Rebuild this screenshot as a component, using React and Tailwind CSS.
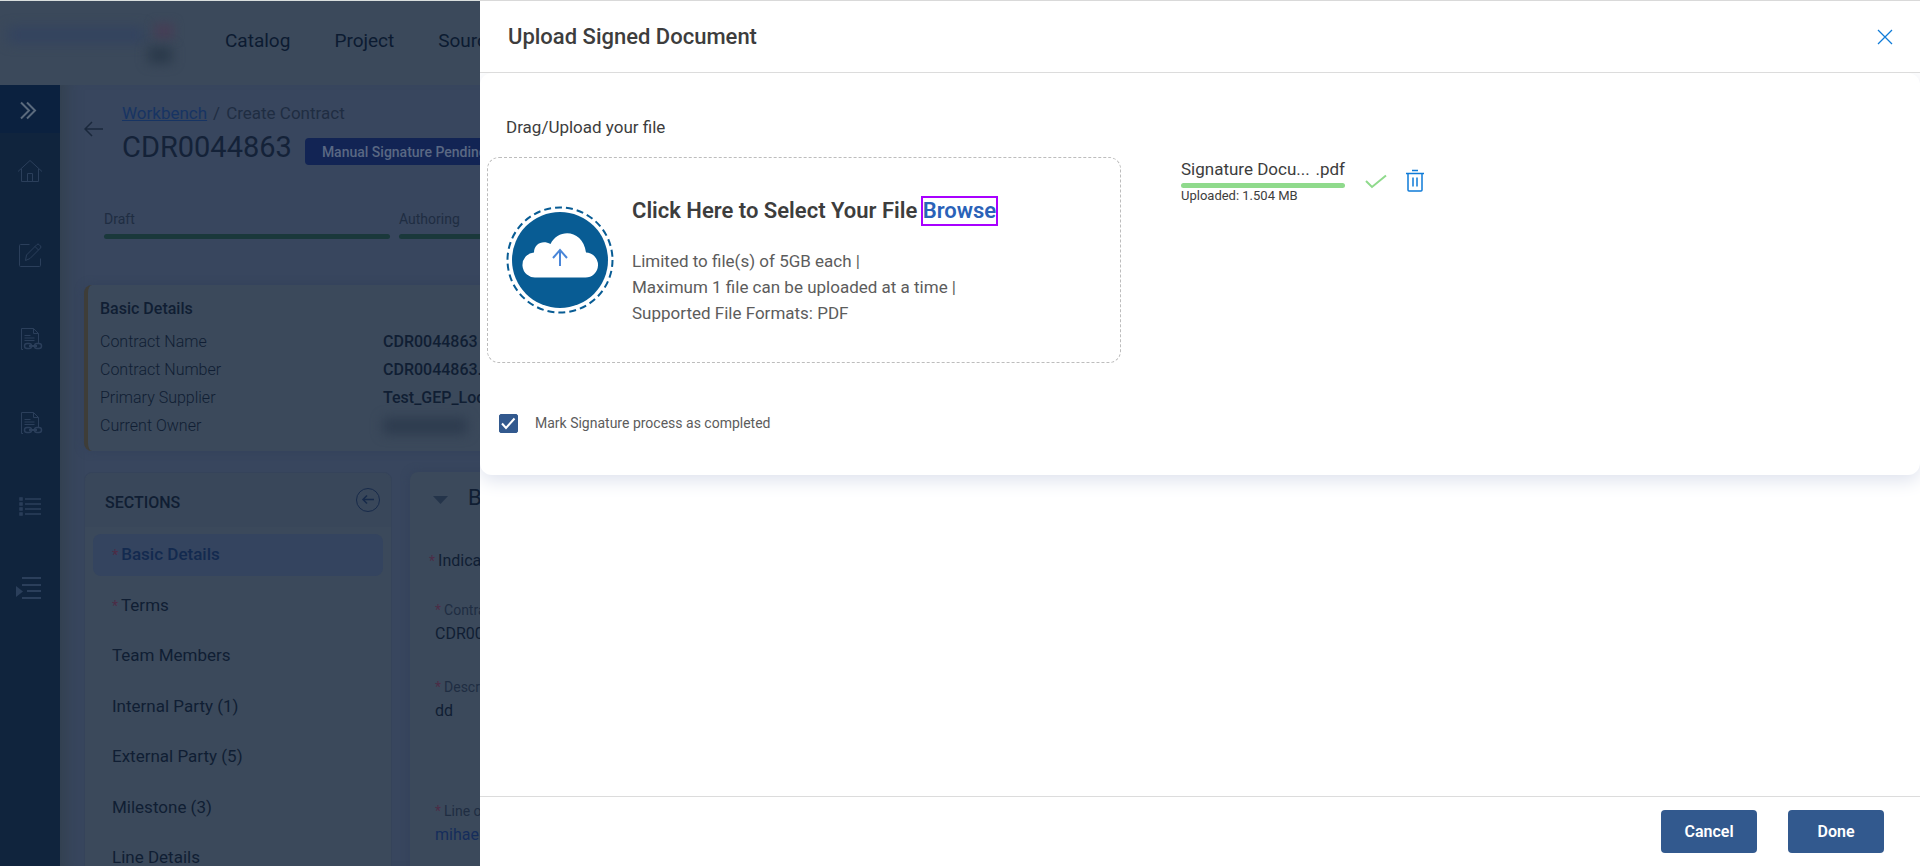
import { useState } from 'react';

const NAV = ['Catalog', 'Project', 'Sourcing'];

const DETAILS = [
  { label: 'Contract Name', value: 'CDR0044863' },
  { label: 'Contract Number', value: 'CDR0044863.0' },
  { label: 'Primary Supplier', value: 'Test_GEP_Loc' },
];

const SECTIONS = [
  { name: 'Basic Details', required: true, active: true },
  { name: 'Terms', required: true },
  { name: 'Team Members' },
  { name: 'Internal Party (1)' },
  { name: 'External Party (5)' },
  { name: 'Milestone (3)' },
  { name: 'Line Details' },
];

function Icon({ children, size = 28, sw = 1 }) {
  return (
    <svg width={size} height={size} viewBox={`0 0 ${size} ${size}`} fill="none" stroke="currentColor" strokeWidth={sw} aria-hidden="true">
      {children}
    </svg>
  );
}

const HomeIcon = () => (
  <Icon>
    <path d="M2 14.500 14 3.500l12 11M5.500 12v12.500h17V12M11.500 24.500v-8h5v8" />
  </Icon>
);

const EditIcon = () => (
  <Icon>
    <path d="M13.500 3.500h-9a1 1 0 0 0-1 1v20a1 1 0 0 0 1 1h19a1 1 0 0 0 1-1v-7" />
    <path d="M9.500 19.500 10.500 14 21 3.500q1-1 2 0l1.500 1.500q1 1 0 2L14 17.500l-4.500 2ZM19 5.500l3.500 3.500" />
  </Icon>
);

const DocLinkIcon = () => (
  <Icon>
    <path d="M7 24.500H5.500v-21h12l5 5V18M17.500 3.500v5h5M8.500 10.500h6M8.500 13h10M8.500 15.500h10" />
    <rect x="8.500" y="18.500" width="7" height="5" rx="2.500" strokeWidth="1.500" />
    <rect x="18.500" y="18.500" width="7" height="5" rx="2.500" strokeWidth="1.500" />
    <path d="M13 21h8" strokeWidth="2" />
  </Icon>
);

const ListIcon = () => (
  <Icon>
    {[6, 11, 16, 21].map(y => (
      <g key={y}>
        <rect x="4" y={y - 1} width="2" height="2" strokeWidth="1.500" />
        <path d={`M9 ${y}h16`} strokeWidth="1.500" />
      </g>
    ))}
  </Icon>
);

const IndentIcon = () => (
  <Icon sw={2}>
    <path d="M6 1h19M6 8h19M11 14h14M6 21h19" />
    <path d="M0 9v11l7-5.500Z" fill="currentColor" stroke="none" />
  </Icon>
);

const SIDE_ITEMS = [
  { name: 'Home', icon: HomeIcon },
  { name: 'Edit', icon: EditIcon },
  { name: 'Linked document', icon: DocLinkIcon },
  { name: 'Related document', icon: DocLinkIcon },
  { name: 'List', icon: ListIcon },
  { name: 'Outline', icon: IndentIcon },
];

const Star = () => <span className="mr-[3px] text-sm text-[#4d2c46]">*</span>;

function Header() {
  return (
    <header className="h-[85px] shrink-0 flex items-center border-t border-[#d9dedd] bg-[#3b495b]">
      <div className="w-[225px] h-14 relative shrink-0" aria-hidden="true">
        <div className="absolute left-2 top-3 w-34 h-4 bg-[#33435f] blur-[6px]" />
        <div className="absolute left-[154px] top-2 w-5 h-4 bg-[#453f56] blur-[5px]" />
        <div className="absolute left-[148px] top-8 w-6 h-4 bg-[#2a394a] blur-[6px]" />
      </div>
      <nav className="flex gap-11 pb-[3px] text-[19px] text-[#0c1b31]">
        {NAV.map(n => <a key={n} href="#">{n}</a>)}
      </nav>
    </header>
  );
}

function Sidebar() {
  return (
    <aside className="w-[60px] shrink-0 bg-[#10243d] text-[#2b3f5b]">
      <button aria-label="Expand menu" className="w-full h-12 pt-1 pr-1 flex items-center justify-center bg-[#0b213f] text-[#5a6a7d]">
        <Icon size={20} sw={2}>
          <path d="m3 1.500 8 8-8 8M9 1.500l8 8-8 8" />
        </Icon>
      </button>
      {SIDE_ITEMS.map(({ name, icon: Glyph }) => (
        <button key={name} aria-label={name} className="w-full h-[84px] pt-6 flex items-start justify-center">
          <Glyph />
        </button>
      ))}
    </aside>
  );
}

function Field({ label, value, link }) {
  return (
    <div className="leading-6">
      <div className="text-sm leading-6 text-[#1f2d42]"><Star />{label}</div>
      {link ? <a href="#" className="text-[#152d5b]">{value}</a> : <div>{value}</div>}
    </div>
  );
}

function Workbench() {
  return (
    <main className="flex-1 min-w-0 bg-[#38465e] shadow-[inset_20px_0_16px_-14px_#33414f] pl-6 text-base text-[#101e33]">
      <div className="flex pt-4">
        <button aria-label="Back" className="w-9.5 h-14 flex items-center text-[#1a283c]">
          <Icon size={20} sw={1}>
            <path d="M19 10H1M8 3l-7 7 7 7" strokeWidth="1.500" />
          </Icon>
        </button>
        <div>
          <div className="text-[17px] leading-6 flex gap-1.5 text-[#1f2d42]">
            <a href="#" className="underline text-[#173463]">Workbench</a>
            <span>/</span>
            <span>Create Contract</span>
          </div>
          <div className="flex items-center gap-[13px]">
            <h1 className="text-[29px] leading-11 text-[#142238]">CDR0044863</h1>
            <span className="mt-2 h-[27px] px-[17px] rounded bg-[#122454] text-sm leading-7 font-medium text-[#5a6883] whitespace-nowrap">Manual Signature Pending</span>
          </div>
        </div>
      </div>

      <div className="flex gap-[9px] pl-5 pt-10 text-sm leading-5 text-[#1f2d42]">
        {['Draft', 'Authoring'].map(s => (
          <div key={s} className="w-[286px] shrink-0">
            {s}
            <div className="mt-[5px] h-[5px] rounded-full bg-[#1a383b]" />
          </div>
        ))}
      </div>

      <section className="mt-[46px] h-[166px] rounded-lg border-l-4 border-[#3e3d38] bg-[#3b495b] shadow-[0_0_8px_#33415a] pl-3 pt-3">
        <h2 className="font-medium leading-6">Basic Details</h2>
        <dl className="grid grid-cols-[283px_1fr] auto-rows-[28px] items-center pt-[7px] whitespace-nowrap">
          {DETAILS.map(d => (
            <div key={d.label} className="contents">
              <dt className="font-light">{d.label}</dt>
              <dd className="font-medium">{d.value}</dd>
            </div>
          ))}
          <dt className="font-light">Current Owner</dt>
          <dd className="w-21 h-4 bg-[#2d3b4e] blur-[6px]" />
        </dl>
      </section>

      <div className="flex gap-[18px] mt-[21px]">
        <section className="w-[308px] h-[480px] shrink-0 rounded-t-lg border border-[#35435a] bg-[#3b495b]">
          <div className="h-[54px] pl-5 pr-2.5 flex items-center justify-between bg-[#39475a] rounded-t-lg">
            <h2 className="pt-1.5 font-medium">SECTIONS</h2>
            <button aria-label="Collapse sections" className="text-[#172a4a]">
              <Icon size={26} sw={1}>
                <circle cx="13" cy="13" r="11.500" />
                <path d="M19 12.500H8M12 8.500l-4 4 4 4" strokeWidth="1.500" />
              </Icon>
            </button>
          </div>
          <ul className="h-[345px] mt-[7px] mx-2 flex flex-col justify-between text-[17px]">
            {SECTIONS.map(s => (
              <li key={s.name}>
                <a
                  href="#"
                  className={s.active
                    ? 'flex items-center h-[42px] pl-[19px] rounded-lg bg-[#34445f] font-medium text-[#132a4f]'
                    : 'flex items-center h-[42px] pl-[19px]'}
                >
                  {s.required && <Star />}{s.name}
                </a>
              </li>
            ))}
          </ul>
        </section>

        <section className="flex-1 h-[480px] rounded-t-lg bg-[#3b495b] shadow-[0_0_8px_#33415a] pl-[19px] overflow-hidden whitespace-nowrap">
          <div className="flex items-center h-14 pl-1 gap-5 text-[22px] leading-6">
            <svg width="15" height="8" viewBox="0 0 15 8" fill="#24344a" aria-hidden="true"><path d="M0 0h15L7.500 8Z" /></svg>
            <h2 className="pb-1">Basic Details</h2>
          </div>
          <div className="pt-[21px] leading-6"><Star />Indicates required field</div>
          <div className="pl-1.5 pt-[25px]">
            <Field label="Contract Name" value="CDR0044863" />
            <div className="pt-[29px]"><Field label="Description" value="dd" /></div>
            <div className="pt-[76px]"><Field label="Line of Business" value="mihaela" link /></div>
          </div>
        </section>
      </div>
    </main>
  );
}

function CloudBadge() {
  return (
    <svg width="108" height="108" viewBox="0 0 108 108" aria-hidden="true" className="shrink-0">
      <circle cx="54" cy="54" r="52.500" fill="none" stroke="#085c94" strokeWidth="2" strokeDasharray="7 4" />
      <circle cx="54" cy="54" r="48" fill="#085c94" />
      <path d="M30 71.500a12.500 12.500 0 0 1-2-25c0-9 9-13 16.500-8.500C52 22 77 23 80 46.500a12.500 12.500 0 0 1-1 25Z" fill="#fff" />
      <path d="M54 60V44M47 52l7-8 7 8" fill="none" stroke="#4a86d8" strokeWidth="2" />
    </svg>
  );
}

function UploadDrawer() {
  const [done, setDone] = useState(true);

  return (
    <div role="dialog" aria-labelledby="drawer-title" className="fixed inset-y-0 right-0 w-3/4 flex flex-col bg-white border-t border-[#d9d9d9] text-[#3d3d3d]">
      <div className="h-18 shrink-0 pl-7 pr-[27px] flex items-center justify-between border-b border-[#dcdcdc]">
        <h2 id="drawer-title" className="text-[22px] font-medium">Upload Signed Document</h2>
        <button aria-label="Close" className="text-[#0f7bd8]">
          <Icon size={16}><path d="m1 1 14 14M15 1 1 15" strokeWidth="1.250" /></Icon>
        </button>
      </div>

      <div className="flex-1 min-h-0 overflow-hidden">
        <div className="rounded-xl pb-10 shadow-[0_6px_18px_#dfe3ee]">
          <p className="pl-6.5 pt-[42px] text-[17px] leading-6">Drag/Upload your file</p>
          <div className="flex items-start pl-[7px] pt-[18px]">
            <div className="w-[634px] h-[206px] flex items-center gap-[18px] pl-[18px] border border-dashed border-[#bdbdbd] rounded-xl">
              <CloudBadge />
              <div>
                <div className="text-[22px] font-semibold leading-8">
                  Click Here to Select Your File{' '}
                  <button className="leading-[26px] outline-2 outline-[#a800ff] text-[#2a62b8] font-semibold">Browse</button>
                </div>
                <p className="pt-[21px] text-[17px] leading-[26px] text-[#5c5c5c]">
                  Limited to file(s) of 5GB each |<br />
                  Maximum 1 file can be uploaded at a time |<br />
                  Supported File Formats: PDF
                </p>
              </div>
            </div>
            <div className="ml-[60px] w-[164px]">
              <div className="flex justify-between text-[17px] leading-6"><span>Signature Docu...</span><span>.pdf</span></div>
              <div className="mt-0.5 h-[5px] rounded-full bg-[#8fda8c]" />
              <div className="text-[13px] leading-4">Uploaded: 1.504 MB</div>
            </div>
            <div className="flex items-center gap-4 ml-5 pt-3 text-[#8fda8c]">
              <Icon size={24} sw={2}><path d="m1 12 6 6L21 6.500" /></Icon>
              <button aria-label="Delete file" className="text-[#0f7bd8]">
                <svg width="20" height="24" viewBox="0 0 20 24" fill="none" stroke="currentColor" strokeWidth="1.500" aria-hidden="true">
                  <path d="M7 1.500h6M1 4.500h18M3 4.500v16.500q0 1 1 1h12q1 0 1-1V4.500M8 8.500v9M12 8.500v9" />
                </svg>
              </button>
            </div>
          </div>
          <label className="mt-12 ml-[19px] flex items-center gap-[17px] text-sm leading-6 text-[#5c5c5c]">
            <span className="relative w-[19px] h-[19px]">
              <input
                type="checkbox"
                checked={done}
                onChange={e => setDone(e.target.checked)}
                className="block appearance-none w-full h-full rounded-xs border border-[#32598e] checked:bg-[#32598e]"
              />
              {done && (
                <svg className="absolute inset-0 pointer-events-none" width="19" height="19" viewBox="0 0 19 19" fill="none" stroke="#fff" strokeWidth="2" aria-hidden="true">
                  <path d="m3 9.500 4 4.500 8.500-9.500" />
                </svg>
              )}
            </span>
            Mark Signature process as completed
          </label>
        </div>
      </div>

      <div className="h-[70px] shrink-0 pr-9 flex items-center justify-end gap-[31px] border-t border-[#dcdcdc]">
        <button className="w-24 h-[43px] rounded bg-[#32598e] text-white font-semibold">Cancel</button>
        <button className="w-24 h-[43px] rounded bg-[#32598e] text-white font-semibold">Done</button>
      </div>
    </div>
  );
}

export default function App() {
  return (
    <div className="h-screen overflow-hidden flex flex-col font-['Roboto',sans-serif]">
      <Header />
      <div className="flex-1 min-h-0 flex">
        <Sidebar />
        <Workbench />
      </div>
      <UploadDrawer />
    </div>
  );
}
